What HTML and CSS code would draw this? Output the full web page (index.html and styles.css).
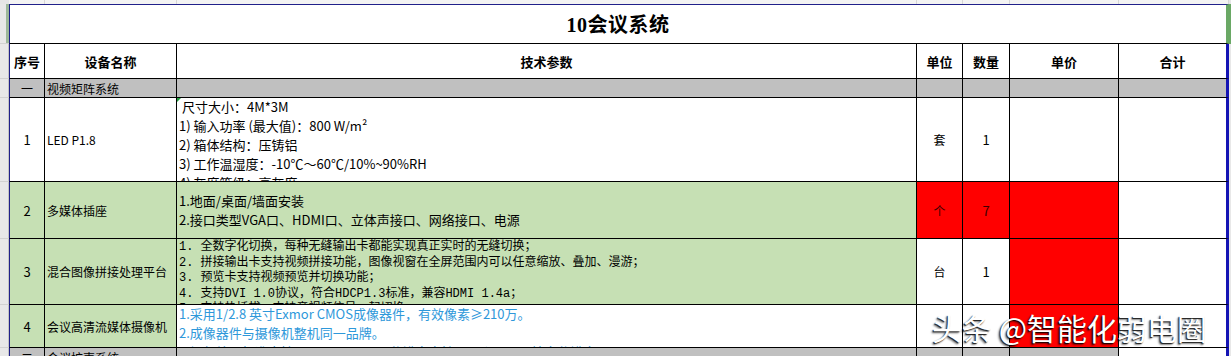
FILE: index.html
```html
<!DOCTYPE html>
<html lang="zh">
<head>
<meta charset="utf-8">
<title>10会议系统</title>
<link rel="stylesheet" href="styles.css">
</head>
<body>
<div class="sheet">
  <!-- top strip -->
  <div class="strip g-left"></div>
  <div class="strip"></div><div class="strip"></div><div class="strip"></div><div class="strip"></div>
  <div class="strip"></div><div class="strip"></div><div class="strip"></div>
  <div class="strip g-right"></div>

  <!-- title -->
  <div class="gutter gutter-sel"></div>
  <div class="c title">10会议系统</div>
  <div class="rgutter rgutter-sel"></div>

  <!-- header -->
  <div class="gutter"></div>
  <div class="c first ctr th">序号</div>
  <div class="c ctr th">设备名称</div>
  <div class="c ctr th">技术参数</div>
  <div class="c ctr th">单位</div>
  <div class="c ctr th">数量</div>
  <div class="c ctr th">单价</div>
  <div class="c last ctr th">合计</div>
  <div class="rgutter"></div>

  <!-- category 1 -->
  <div class="gutter"></div>
  <div class="c first ctr cat">一</div>
  <div class="c left cat">视频矩阵系统</div>
  <div class="c cat"></div>
  <div class="c cat"></div>
  <div class="c cat"></div>
  <div class="c cat"></div>
  <div class="c last cat"></div>
  <div class="rgutter"></div>

  <!-- row 1 -->
  <div class="gutter"></div>
  <div class="c first ctr num">1</div>
  <div class="c left name">LED P1.8</div>
  <div class="c tech tech-top note">
    <div class="ln">&nbsp;尺寸大小：4M*3M</div>
    <div class="ln">1) 输入功率 (最大值)：800 W/m²</div>
    <div class="ln">2) 箱体结构：压铸铝</div>
    <div class="ln">3) 工作温湿度：-10℃～60℃/10%~90%RH</div>
    <div class="ln">4) 灰度等级：高灰度</div>
  </div>
  <div class="c ctr unit">套</div>
  <div class="c ctr qty">1</div>
  <div class="c"></div>
  <div class="c last"></div>
  <div class="rgutter"></div>

  <!-- row 2 -->
  <div class="gutter"></div>
  <div class="c first ctr num green">2</div>
  <div class="c left name green">多媒体插座</div>
  <div class="c tech tech-mid green">
    <div class="ln">1.地面/桌面/墙面安装</div>
    <div class="ln">2.接口类型VGA口、HDMI口、立体声接口、网络接口、电源</div>
  </div>
  <div class="c ctr unit red dark">个</div>
  <div class="c ctr qty red dark">7</div>
  <div class="c red"></div>
  <div class="c last"></div>
  <div class="rgutter"></div>

  <!-- row 3 -->
  <div class="gutter"></div>
  <div class="c first ctr num green">3</div>
  <div class="c left name green">混合图像拼接处理平台</div>
  <div class="c tech tech-song green">
    <div class="ln">1. 全数字化切换，每种无缝输出卡都能实现真正实时的无缝切换；</div>
    <div class="ln">2. 拼接输出卡支持视频拼接功能，图像视窗在全屏范围内可以任意缩放、叠加、漫游；</div>
    <div class="ln">3. 预览卡支持视频预览并切换功能；</div>
    <div class="ln">4. 支持DVI 1.0协议，符合HDCP1.3标准，兼容HDMI 1.4a；</div>
    <div class="ln">5. 支持热插拔，支持音视频信号一起切换；</div>
  </div>
  <div class="c ctr unit">台</div>
  <div class="c ctr qty">1</div>
  <div class="c red"></div>
  <div class="c last"></div>
  <div class="rgutter"></div>

  <!-- row 4 -->
  <div class="gutter"></div>
  <div class="c first ctr num green">4</div>
  <div class="c left name green">会议高清流媒体摄像机</div>
  <div class="c tech tech-top blue">
    <div class="ln">1.采用1/2.8 英寸Exmor CMOS成像器件，有效像素≥210万。</div>
    <div class="ln">2.成像器件与摄像机整机同一品牌。</div>
    <div class="ln">3.视频编码标准支持H.265、H.264，分辨率支持1920*1080，帧率分辨率≥30fps</div>
  </div>
  <div class="c"></div>
  <div class="c"></div>
  <div class="c red"></div>
  <div class="c last"></div>
  <div class="rgutter"></div>

  <!-- category 2 -->
  <div class="gutter"></div>
  <div class="c first ctr cat cat-clip">二</div>
  <div class="c left cat cat-clip">会议扩声系统</div>
  <div class="c cat"></div>
  <div class="c cat"></div>
  <div class="c cat"></div>
  <div class="c cat"></div>
  <div class="c last"></div>
  <div class="rgutter"></div>
</div>

<div class="watermark">头条 @智能化弱电圈</div>
</body>
</html>
```

FILE: styles.css
```css
html, body {
  margin: 0;
  padding: 0;
  background: #ffffff;
  overflow: hidden;
}

body {
  font-family: "Noto Sans CJK SC", "Noto Sans", sans-serif;
  font-size: 13px;
  color: #000;
  width: 1231px;
  height: 356px;
  position: relative;
}

.sheet {
  display: grid;
  grid-template-columns: 9px 36px 132px 740px 46px 47px 109px 110px 2px;
  grid-template-rows: 4px 40px 35px 19px 84px 57px 66px 43px 19px;
}

.sheet > div {
  box-sizing: border-box;
  min-width: 0;
  overflow: hidden;
}

/* top strip of the spreadsheet above */
.strip {
  background: #f3f3f3;
  border-right: 1px solid #d6d6d6;
}
.strip.g-left {
  background: #e6e6e6;
  border-right: none;
}
.strip.g-right {
  background: #e6e6e6;
  border-right: none;
}

/* gutters */
.gutter {
  background: #e8e8e8;
  border-bottom: 1px solid #d2d2d2;
  box-shadow: inset -1px 0 0 #c4c4c4;
}
.gutter-sel {
  box-shadow: inset -3px 0 0 #9db89a;
}
.rgutter {
  background: #e8e8e8;
}
.rgutter-sel {
  background: #6aa865;
}

/* cells */
.c {
  border-right: 1px solid #000;
  border-bottom: 1px solid #000;
  background: #fff;
}
.c.first {
  border-left: 1px solid #20208a;
}
.c.last {
  border-right: 3px solid #1414b4;
}

.title {
  grid-column: 2 / span 7;
  border-left: 1px solid #20208a;
  border-top: 1px solid #20208a;
  border-right: 3px solid #6aa865;
  display: flex;
  align-items: center;
  justify-content: center;
  font-family: "Liberation Serif", "Noto Sans CJK SC", serif;
  font-weight: 700;
  font-size: 20px;
  letter-spacing: 0.5px;
  padding-bottom: 1px;
}

.ctr {
  display: flex;
  align-items: center;
  justify-content: center;
}
.left {
  display: flex;
  align-items: center;
  padding-left: 2px;
  white-space: nowrap;
}

.th {
  font-weight: 700;
  font-size: 13px;
}

.cat {
  background: #c0c0c0;
  font-size: 12px;
}
.cat-clip {
  align-items: flex-start;
  padding-top: 2px;
  line-height: 16px;
}

.num {
  font-size: 13px;
}
.name {
  font-size: 12px;
}
.unit {
  font-size: 12px;
}
.qty {
  font-size: 13px;
}

.green {
  background: #c6e0b4;
}
.red {
  background: #ff0000;
}
.dark {
  color: #3c0000;
}
.blue {
  color: #2e98da;
}

/* technical parameter cells */
.tech {
  padding: 0 2px;
  white-space: nowrap;
}
.tech .ln {
  line-height: 19px;
}
.tech-top {
  padding-top: 0;
}
.tech-top .ln:first-child {
  margin-top: -1px;
}
.tech-mid {
  display: flex;
  flex-direction: column;
  justify-content: center;
  padding-bottom: 1px;
}
.tech-song {
  font-family: "Liberation Mono", "Noto Sans CJK SC", monospace;
  font-size: 12px;
}
.tech-song .ln {
  line-height: 15.5px;
}
.tech-song .ln:first-child {
  margin-top: 1px;
}

/* green error indicator in the corner of a cell */
.note {
  position: relative;
}
.note::before {
  content: "";
  position: absolute;
  left: 0;
  top: 0;
  border-top: 4px solid #1e9e3c;
  border-right: 4px solid transparent;
}

.watermark {
  position: absolute;
  left: 932px;
  top: 307px;
  font-family: "Noto Sans CJK SC", sans-serif;
  font-size: 30px;
  line-height: 40px;
  color: #ffffff;
  white-space: nowrap;
  text-shadow: -1px 1px 1px rgba(0, 0, 0, 0.85), -2px 2px 2px rgba(0, 0, 0, 0.45);
}
```
